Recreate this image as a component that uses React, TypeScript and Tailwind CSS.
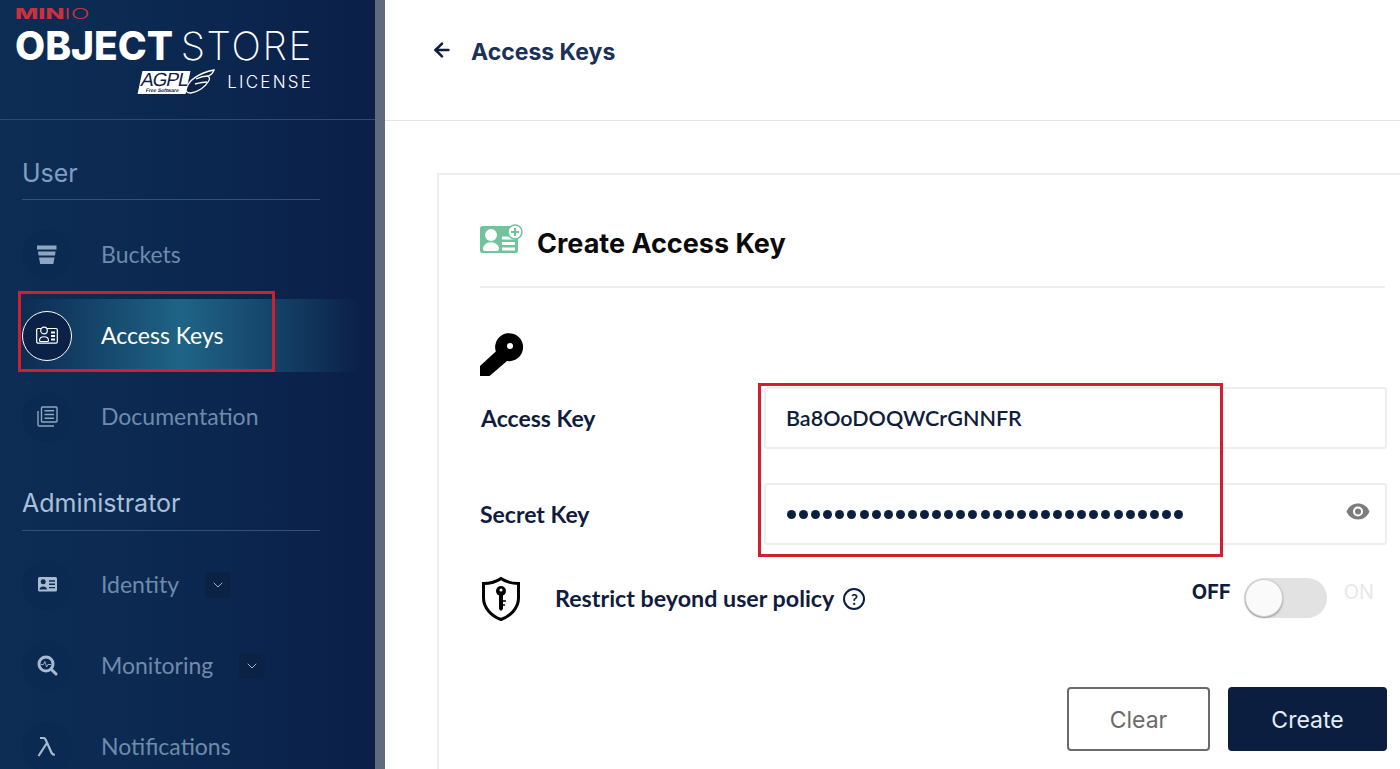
import React from "react";
import { ChevronDown, ArrowLeft } from "lucide-react";

const BucketIcon = () => (
  <svg width="20" height="20" viewBox="0 0 20 20" fill="#8fa6c0">
    <path d="M0 0.5h19.5v4H0z" />
    <path d="M1 6.500h17.500l-.5 4H1.500z" />
    <path d="M2 12.500h15.500l-1.200 6.600H3.200z" />
  </svg>
);
const CardIcon = () => (
  <svg width="22" height="19" viewBox="0 0 22 19" fill="none" stroke="#ffffff" strokeWidth="1.200">
    <path d="M5 2.500H2a1.300 1.300 0 0 0-1.300 1.300v12a1.300 1.300 0 0 0 1.300 1.300h18a1.300 1.300 0 0 0 1.300-1.300v-12A1.300 1.300 0 0 0 20 2.500h-9" />
    <circle cx="8" cy="4.500" r="3.300" fill="#0b2148" />
    <path d="M3.500 14.500c0-5 9-5 9 0 0 .8-.5 1-1 1h-7c-.5 0-1-.2-1-1z" />
    <path d="M15 6.500h4M15 10h4M15 13.500h4" strokeWidth="2" />
  </svg>
);
const DocIcon = () => (
  <svg width="21" height="21" viewBox="0 0 21 21" fill="none" stroke="#8fa6c0" strokeWidth="1.400">
    <rect x="4.500" y="1" width="15.500" height="15" rx="1" />
    <path d="M7.500 4.800h9.500M7.500 8.500h9.500M7.500 12.200h9.500" />
    <path d="M1 5v13.500a1.500 1.500 0 0 0 1.500 1.500H17" />
  </svg>
);
const IdIcon = () => (
  <svg width="19" height="15" viewBox="0 0 19 15">
    <rect x="0" y="0" width="19" height="14.500" rx="1.500" fill="#a8bbd0" />
    <circle cx="5.200" cy="4.800" r="2.500" fill="#0d2a52" />
    <path d="M1.500 12.500c0-4 7.500-4 7.500 0z" fill="#0d2a52" />
    <path d="M11 4h6M11 7.300h6M11 10.600h6" stroke="#0d2a52" strokeWidth="1.400" />
  </svg>
);
const MonitorIcon = () => (
  <svg width="21" height="21" viewBox="0 0 21 21" fill="none">
    <circle cx="9" cy="9" r="7" stroke="#a8bbd0" strokeWidth="3" />
    <path d="M4 9.500h2.500l1.300-3 1.800 5.500 1.300-2.500h3.200" stroke="#a8bbd0" strokeWidth="0.900" />
    <path d="M14 14l5 5" stroke="#a8bbd0" strokeWidth="3" strokeLinecap="round" />
  </svg>
);
const LambdaIcon = () => (
  <svg width="20" height="20" viewBox="0 0 20 20" fill="none" stroke="#a8bbd0" strokeWidth="2.200">
    <path d="M3 1h3.200c1.300 0 2 .6 2.500 1.800L14.500 15.800c.5 1.100 1.200 1.900 3.300 2" />
    <path d="M9.600 6.500L1.500 19" />
  </svg>
);

const Item = ({
  icon,
  label,
  active,
  chevron,
}: {
  icon: React.ReactNode;
  label: string;
  active?: boolean;
  chevron?: boolean;
}) => (
  <div
    className={
      active
        ? "flex h-[73px] w-[338px] items-center bg-[linear-gradient(90deg,rgba(31,100,134,0)_0%,#1f6486_47%,rgba(31,100,134,0)_100%)]"
        : "flex h-[73px] w-[338px] items-center"
    }
  >
    <div
      className={
        active
          ? "flex h-[50px] w-[50px] items-center justify-center rounded-full border-[1.5px] border-white bg-[#0b2148]"
          : "flex h-[50px] w-[50px] items-center justify-center rounded-full bg-[#0b2a52]"
      }
    >
      {icon}
    </div>
    <span
      className={
        active
          ? "ml-[29px] font-['Lato'] text-[23px] leading-none text-white"
          : "ml-[29px] font-['Lato'] text-[23px] leading-none text-[#6f8bab]"
      }
    >
      {label}
    </span>
    {chevron && (
      <span className="ml-[26px] flex h-[26px] w-[26px] items-center justify-center rounded-[3px] bg-[#0b2245]">
        <ChevronDown size={16} strokeWidth={1.500} color="#9fb3c8" />
      </span>
    )}
  </div>
);

export default function App() {
  return (
    <div className="flex h-screen w-full overflow-hidden bg-white font-['Inter',sans-serif]">
      <aside className="h-full w-[375px] shrink-0 overflow-hidden bg-[linear-gradient(90deg,#0d2d54_0%,#0b2750_55%,#0b1f47_100%)]">
        <div className="flex h-[120px] flex-col items-start border-b border-[#2d4a70] pl-[15px]">
          <div className="mt-[5px] flex h-[16px] origin-left scale-x-[1.65] items-center font-['Inter'] text-[15px] leading-none">
            <span className="font-extrabold text-[#c8323f]">MIN</span>
            <span className="font-light text-[#c8323f]">IO</span>
          </div>
          <div className="mt-[2px] flex h-[44px] w-[298px] items-center justify-between font-['Inter'] text-[39px] leading-none text-white">
            <span className="font-extrabold">OBJECT</span>
            <span className="font-extralight tracking-[1.600px]">STORE</span>
          </div>
          <div className="mt-[1px] flex h-[28px] w-[298px] items-center justify-end">
            <div className="flex h-[26px] w-[76px] items-center">
              <div className="flex h-[23px] w-[48px] shrink-0 -skew-x-12 flex-col items-center justify-center bg-white text-[#0d2145]">
                <span className="font-['Liberation_Sans'] text-[19px] leading-[15px] tracking-[-1px]">AGPL</span>
                <span className="font-['Liberation_Sans'] text-[5px] font-bold leading-[6px]">Free Software</span>
              </div>
              <svg width="30" height="26" viewBox="0 0 30 26" className="-ml-[3px] shrink-0" fill="#0d2145" stroke="#ffffff" strokeWidth="1.300">
                <path d="M1 21C3 11 14 4 29 1c-1 3-3 5-6 6 2 2 2 3 0 6-3 5-10 10-17 11-3 0-5-1-5-3z" />
                <path d="M11 10c4-2 8-3 12-3M10 15c4-1 8-2 12-2" />
              </svg>
            </div>
            <span className="ml-[11px] font-['Inter'] text-[17px] font-light leading-none tracking-[2.200px] text-white">LICENSE</span>
          </div>
        </div>

        <nav className="pl-[22px]">
          <div className="flex h-[80px] w-[298px] items-end border-b border-[#33507a] pb-[13px] text-[25px] leading-none text-[#7f9fc2]">
            User
          </div>
          <div className="mt-[18px] flex flex-col gap-[8px]">
            <Item icon={<BucketIcon />} label="Buckets" />
            <Item icon={<CardIcon />} label="Access Keys" active />
            <Item icon={<DocIcon />} label="Documentation" />
          </div>
          <div className="flex h-[78px] w-[298px] items-end border-b border-[#33507a] pb-[14px] text-[25px] leading-none text-[#a9c0d8]">
            Administrator
          </div>
          <div className="mt-[17px] flex flex-col gap-[8px]">
            <Item icon={<IdIcon />} label="Identity" chevron />
            <Item icon={<MonitorIcon />} label="Monitoring" chevron />
            <Item icon={<LambdaIcon />} label="Notifications" />
          </div>
        </nav>
      </aside>

      <div className="h-full w-[10px] shrink-0 bg-[#5d6b7c]" />

      <main className="h-full min-w-0 flex-1">
        <header className="flex h-[121px] items-start border-b border-[#e3e3e3] pl-[46px] pt-[38px]">
          <ArrowLeft size={22} strokeWidth={2.800} color="#0b1f3f" className="mt-[1px]" />
          <h1 className="ml-[18px] font-['Inter'] text-[23px] font-bold leading-[28px] text-[#1b3157]">Access Keys</h1>
        </header>

        <section className="ml-[52px] mt-[52px] h-[700px] w-[1000px] border-2 border-[#eeeeee] pl-[41px] pr-[45px]">
          <div className="flex h-[113px] w-[905px] items-center border-b-2 border-[#eeeeee] pt-[25px]">
            <svg width="43" height="30" viewBox="0 0 43 30" className="-mt-[9px]">
              <rect x="0" y="2" width="38" height="27" rx="2.500" fill="#6fc49c" />
              <circle cx="11" cy="11" r="6" fill="#ffffff" />
              <path d="M3 25c0-9 16-9 16 0 0 1-1 2-2 2H5c-1 0-2-1-2-2z" fill="#ffffff" />
              <path d="M22 14h13M22 19.500h13M22 25h13" stroke="#ffffff" strokeWidth="3" />
              <circle cx="35" cy="8" r="7" fill="#ffffff" stroke="#6fc49c" strokeWidth="1.500" />
              <path d="M35 4v8M31 8h8" stroke="#6fc49c" strokeWidth="2" />
            </svg>
            <h2 className="ml-[14px] font-['Inter'] text-[27px] font-bold leading-none text-[#0b0b0b]">Create Access Key</h2>
          </div>

          <svg width="44" height="44" viewBox="0 0 44 44" className="mt-[45px] block">
            <path d="M0 43V33L15.800 18.500A14 14 0 1 1 27 28L9.500 43z" fill="#000000" />
            <circle cx="30" cy="13" r="3" fill="#ffffff" />
          </svg>

          <div className="mt-[10px] flex h-[62px] items-center">
            <label className="w-[284px] pl-[1px] font-['Lato'] text-[23px] font-bold leading-none text-[#101c3c]">Access Key</label>
            <div className="flex h-[62px] w-[623px] items-center rounded-[3px] border-2 border-[#eeeeee] pl-[20px] font-['Lato'] text-[21.500px] font-semibold text-[#101c3c]">
              Ba8OoDOQWCrGNNFR
            </div>
          </div>

          <div className="mt-[34px] flex h-[62px] items-center">
            <label className="w-[284px] font-['Lato'] text-[23px] font-bold leading-none text-[#101c3c]">Secret Key</label>
            <div className="flex h-[62px] w-[623px] items-center justify-between rounded-[3px] border-2 border-[#eeeeee] pl-[21px] pr-[15px]">
              <div className="flex gap-[3.100px]">
                {Array.from({ length: 33 }).map((_, i) => (
                  <span key={i} className="h-[9px] w-[9px] rounded-full bg-[#0b1f3f]" />
                ))}
              </div>
              <svg width="24" height="17" viewBox="0 0 24 17" className="-mt-[6px]">
                <path d="M12 .5C6.500.5 2.500 3.800.5 8.500c2 4.700 6 8 11.500 8s9.500-3.300 11.500-8C21.500 3.800 17.500.5 12 .5z" fill="#7c7c7c" />
                <circle cx="12" cy="8.500" r="5" fill="#ffffff" />
                <circle cx="12" cy="8.500" r="3" fill="#7c7c7c" />
              </svg>
            </div>
          </div>

          <div className="mt-[29px] flex h-[50px] items-center">
            <svg width="42" height="46" viewBox="0 0 40 46" fill="none">
              <path d="M20 2.500C15 6 8 7.500 2.500 7.500V22c0 10 8 18 17.500 21.500C29.500 40 37.500 32 37.500 22V7.500C32 7.500 25 6 20 2.500z" stroke="#000000" strokeWidth="3" />
              <circle cx="20" cy="15" r="5" fill="#000000" />
              <circle cx="20" cy="14" r="1.500" fill="#ffffff" />
              <path d="M18 18h4v15l-2 2-2-2z" fill="#000000" />
              <path d="M22 25h3M22 29h2" stroke="#000000" strokeWidth="1.500" />
            </svg>
            <span className="ml-[33px] font-['Lato'] text-[23.250px] font-bold leading-none text-[#101c3c]">Restrict beyond user policy</span>
            <span className="ml-[9px] flex h-[22px] w-[22px] items-center justify-center rounded-full border-2 border-[#0b1f3f] font-['Lato'] text-[15px] font-bold leading-none text-[#0b1f3f]">?</span>
            <div className="ml-auto -mt-[14px] flex items-center">
              <span className="font-['Inter'] text-[20px] font-bold leading-none text-[#101c3c]">OFF</span>
              <div className="ml-[13px] mt-[12px] flex h-[40px] w-[83px] items-center rounded-full bg-[#e2e2e2] pl-[1px]">
                <span className="h-[38px] w-[38px] rounded-full border border-[#cfcfcf] bg-[#fafafa] shadow-[0_1px_2px_rgba(0,0,0,0.35)]" />
              </div>
              <span className="ml-[17px] mr-[16px] font-['Inter'] text-[20px] leading-none text-[#e8e8e8]">ON</span>
            </div>
          </div>

          <div className="mt-[63px] flex justify-end gap-[18px] pr-[3px]">
            <button className="h-[64px] w-[143px] rounded-[4px] border-2 border-[#6b6b6b] bg-white pt-[2px] font-['Inter'] text-[23px] text-[#6b6b6b]">Clear</button>
            <button className="h-[64px] w-[159px] rounded-[4px] bg-[#0b1e40] pt-[2px] font-['Inter'] text-[23px] text-[#e4edf7]">Create</button>
          </div>
        </section>
      </main>

      <div className="pointer-events-none absolute left-[18px] top-[291px] h-[81px] w-[257px] border-[3px] border-[#d0202f]" />
      <div className="pointer-events-none absolute left-[758px] top-[383px] h-[174px] w-[465px] border-[3px] border-[#d0202f]" />
    </div>
  );
}
